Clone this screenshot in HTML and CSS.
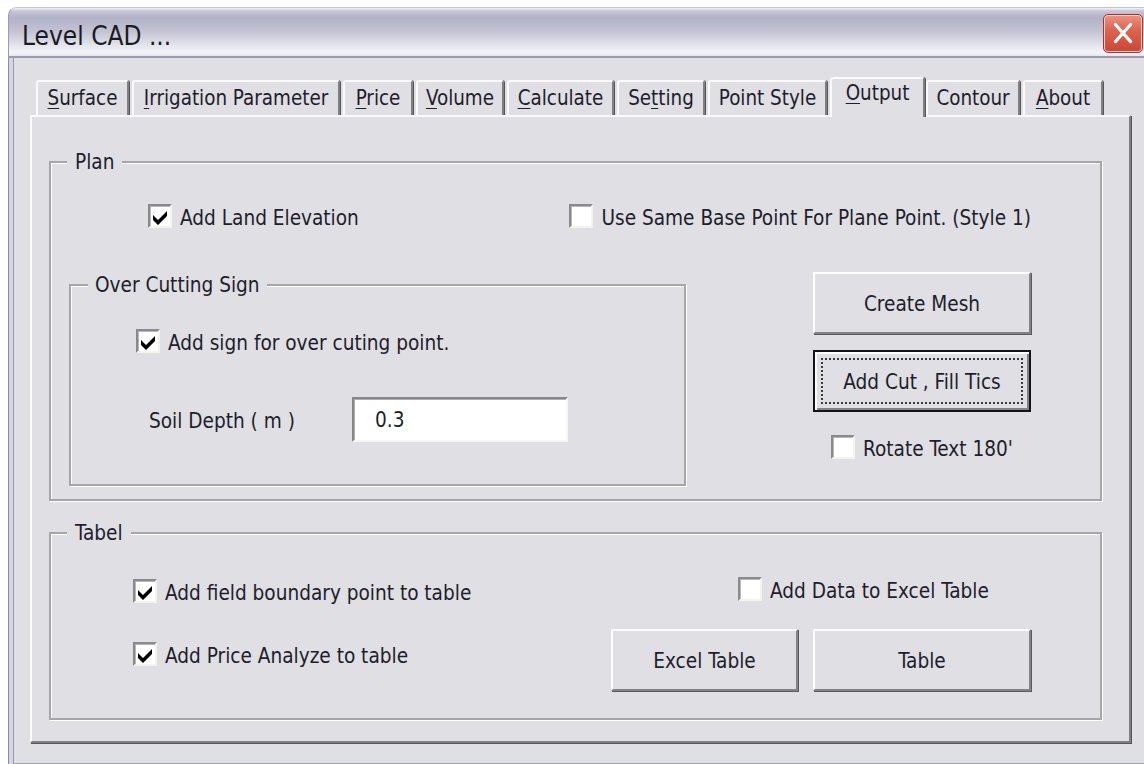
FILE: index.html
```html
<!DOCTYPE html>
<html lang="en">
<head>
<meta charset="utf-8">
<title>Level CAD ...</title>
<link rel="stylesheet" href="styles.css">
</head>
<body>
<div class="window">
  <div class="titlebar">
    <span class="title">Level CAD ...</span>
    <button class="close" type="button" aria-label="Close">
      <svg viewBox="0 0 40 39" width="40" height="39"><path d="M12 10 L28 28 M28 10 L12 28" stroke="#fff" stroke-width="3.4" stroke-linecap="round" fill="none"/></svg>
    </button>
  </div>
  <div class="client">
    <div class="tabs">
      <div class="tab t1"><u>S</u>urface</div>
      <div class="tab t2"><u>I</u>rrigation Parameter</div>
      <div class="tab t3"><u>P</u>rice</div>
      <div class="tab t4"><u>V</u>olume</div>
      <div class="tab t5"><u>C</u>alculate</div>
      <div class="tab t6">Se<u>t</u>ting</div>
      <div class="tab t7">Point Style</div>
      <div class="tab t8 active"><u>O</u>utput</div>
      <div class="tab t9">Contour</div>
      <div class="tab t10"><u>A</u>bout</div>
    </div>
    <div class="panel">
      <div class="group plan">
        <div class="group-title">Plan</div>
        <div class="plan-top">
          <div class="check land">
            <span class="box"><svg viewBox="0 0 16 16"><polygon points="1,6 6,11 15,2 15,7 6,16 1,11"/></svg></span>
            <span>Add Land Elevation</span>
          </div>
          <div class="check same-base">
            <span class="box"></span>
            <span>Use Same Base Point For Plane Point. (Style 1)</span>
          </div>
        </div>
        <div class="plan-main">
          <div class="group cutting">
            <div class="group-title">Over Cutting Sign</div>
            <div class="check cut-sign">
              <span class="box"><svg viewBox="0 0 16 16"><polygon points="1,6 6,11 15,2 15,7 6,16 1,11"/></svg></span>
              <span>Add sign for over cuting point.</span>
            </div>
            <div class="soil">
              <span class="soil-label">Soil Depth ( m )</span>
              <div class="input">0.3</div>
            </div>
          </div>
          <div class="actions">
            <button class="btn" type="button">Create Mesh</button>
            <button class="btn default" type="button"><span class="focus">Add Cut , Fill Tics</span></button>
            <div class="check rotate">
              <span class="box"></span>
              <span>Rotate Text 180'</span>
            </div>
          </div>
        </div>
      </div>
      <div class="group tabel">
        <div class="group-title">Tabel</div>
        <div class="tabel-body">
          <div class="tabel-left">
            <div class="check">
              <span class="box"><svg viewBox="0 0 16 16"><polygon points="1,6 6,11 15,2 15,7 6,16 1,11"/></svg></span>
              <span>Add field boundary point to table</span>
            </div>
            <div class="check price">
              <span class="box"><svg viewBox="0 0 16 16"><polygon points="1,6 6,11 15,2 15,7 6,16 1,11"/></svg></span>
              <span>Add Price Analyze to table</span>
            </div>
          </div>
          <div class="tabel-right">
            <div class="check excel-data">
              <span class="box"></span>
              <span>Add Data to Excel Table</span>
            </div>
            <div class="btn-row">
              <button class="btn excel" type="button">Excel Table</button>
              <button class="btn table" type="button">Table</button>
            </div>
          </div>
        </div>
      </div>
    </div>
  </div>
</div>
</body>
</html>
```
FILE: styles.css
```css
* {
  box-sizing: border-box;
}

body {
  margin: 0;
  background: #ffffff;
  font-family: "DejaVu Sans Condensed", "DejaVu Sans", sans-serif;
  font-size: 20.6px;
  color: #1e1e2c;
}

/* Window frame */
.window {
  margin: 7px 0 0 8px;
  width: 1136px;
  height: 757px;
  display: flex;
  flex-direction: column;
  border-radius: 8px 0 0 0;
  overflow: hidden;
}

.titlebar {
  flex: none;
  height: 51px;
  display: flex;
  align-items: flex-start;
  padding-left: 13px;
  border-top: 1px solid #c4c4d4;
  border-left: 1px solid #9a9ab0;
  border-bottom: 2px solid #9a9ab0;
  border-radius: 8px 0 0 0;
  background: linear-gradient(to bottom,
    #f4f4f8 0px,
    #c6c6d6 3px,
    #b2b2c8 10px,
    #c4c4d4 24px,
    #e6e6ee 38px,
    #f4f4f8 45px,
    #e4e4ec 48px);
}

.title {
  margin-top: 15px;
  font-size: 26px;
  line-height: 26px;
  color: #1a1a22;
}

.close {
  margin-left: auto;
  margin-top: 6px;
  margin-right: 1px;
  width: 40px;
  height: 39px;
  padding: 0;
  border: 1px solid #a8342a;
  border-radius: 5px;
  background: linear-gradient(to bottom, #ec9484 0%, #dc6450 40%, #cc4634 100%);
  box-shadow: inset 0 0 0 1px #f6d0c8;
  display: flex;
  align-items: center;
  justify-content: center;
}

.close svg {
  display: block;
}

/* Dialog client area */
.client {
  flex: 1;
  background: #e0dfe3;
  padding: 19px 0 0 22px;
  box-shadow:
    inset 1px 0 0 #8a8aa2,
    inset 5px 0 0 #d6d6e2,
    inset 6px 0 0 #9a9aae,
    inset 0 -1px 0 #a2a2ba;
}

/* Tab strip */
.tabs {
  display: flex;
  align-items: flex-end;
  height: 38px;
  padding-left: 6px;
}

.tab {
  position: relative;
  height: 35px;
  margin-right: 3px;
  padding-top: 4px;
  line-height: 24px;
  font-size: 20.4px;
  text-align: center;
  white-space: nowrap;
  border-top: 2px solid #fafafa;
  border-left: 2px solid #fafafa;
  border-right: 2px solid #808084;
  border-radius: 3px 3px 0 0;
  box-shadow: 1px 0 0 #55555a;
}

.tab u {
  text-underline-offset: 3px;
  text-decoration-thickness: 1px;
}

.t1 { width: 93px; }
.t2 { width: 208px; }
.t3 { width: 70px; }
.t4 { width: 88px; }
.t5 { width: 107px; }
.t6 { width: 88px; }
.t7 { width: 119px; }
.t8 { width: 95px; margin-right: 1px; }
.t9 { width: 94px; }
.t10 { width: 80px; }

.tab.active {
  z-index: 1;
  height: 40px;
  margin-bottom: -2px;
  padding-top: 2px;
  background: #e0dfe3;
}

/* Tab page */
.panel {
  width: 1101px;
  height: 628px;
  padding: 44px 27px 0 17px;
  border: 2px solid;
  border-color: #fafafa #808084 #808084 #fafafa;
  box-shadow: 1px 1px 0 #56565a;
}

/* Etched group boxes */
.group {
  border: 2px solid #a6a5aa;
  box-shadow: inset 1px 1px 0 #ffffff, 1px 1px 0 #ffffff;
}

.group-title {
  width: fit-content;
  height: 24px;
  line-height: 24px;
  margin: -13px 0 0 -2px;
  padding: 0 8px;
  background: #e0dfe3;
  white-space: nowrap;
}

.plan {
  height: 340px;
  padding: 0 69px 0 18px;
}

.plan-top {
  display: flex;
  justify-content: space-between;
  margin-top: 30px;
}

.land {
  margin-left: 79px;
}

.plan-main {
  display: flex;
  justify-content: space-between;
  align-items: flex-start;
  margin-top: 44px;
}

.cutting {
  width: 617px;
  height: 202px;
  margin-top: 12px;
}

.cutting .group-title {
  margin-left: 17px;
  padding: 0 7px;
}

.cut-sign {
  margin: 32px 0 0 65px;
}

.soil {
  display: flex;
  align-items: center;
  margin: 44px 0 0 78px;
}

.soil-label {
  width: 203px;
  padding-top: 2px;
}

.input {
  width: 216px;
  height: 45px;
  padding: 3px 0 0 21px;
  line-height: 36px;
  background: #ffffff;
  border: 2px solid;
  border-color: #86868a #f6f6f2 #f6f6f2 #86868a;
  box-shadow: inset 1px 1px 0 #b0b0b4;
}

.actions {
  width: 218px;
  display: flex;
  flex-direction: column;
}

.rotate {
  margin: 23px 0 0 18px;
}

/* Checkboxes */
.check {
  display: flex;
  align-items: center;
  height: 24px;
  gap: 8px;
  white-space: nowrap;
}

.check > span:last-child {
  padding-top: 3px;
}

.box {
  flex: none;
  width: 24px;
  height: 24px;
  background: #ffffff;
  border: 2px solid;
  border-color: #8a8a8e #f4f4ec #f4f4ec #8a8a8e;
  box-shadow: inset 1px 1px 0 #b8b8bc;
  display: flex;
  align-items: center;
  justify-content: center;
}

.box svg {
  width: 16px;
  height: 16px;
  margin: 1px 0 0 0;
  fill: #000000;
}

/* Push buttons */
.btn {
  display: flex;
  align-items: center;
  justify-content: center;
  height: 62px;
  padding: 2px 0 0;
  font: inherit;
  color: #1e1e2c;
  background: #e0dfe3;
  border: 2px solid;
  border-color: #ffffff #838387 #838387 #ffffff;
  box-shadow: 1px 1px 0 #5a5a5e;
  white-space: nowrap;
}

.btn.default {
  margin-top: 16px;
  padding: 6px;
  border: 2px solid #141418;
  box-shadow: inset 2px 2px 0 #ffffff, inset -2px -2px 0 #838387;
}

.focus {
  flex: 1;
  align-self: stretch;
  display: flex;
  align-items: center;
  justify-content: center;
  padding-top: 2px;
  border: 2px dotted #3a3a40;
}

/* Table group */
.tabel {
  height: 188px;
  margin-top: 31px;
  padding: 0 69px 0 18px;
}

.tabel-body {
  display: flex;
  justify-content: space-between;
  align-items: flex-start;
}

.tabel-left {
  margin: 34px 0 0 64px;
}

.tabel-left .price {
  margin-top: 39px;
}

.tabel-right {
  width: 420px;
  margin-top: 32px;
}

.excel-data {
  margin-left: 127px;
}

.btn-row {
  display: flex;
  gap: 15px;
  margin-top: 28px;
}

.btn.excel {
  width: 187px;
}

.btn.table {
  width: 218px;
}
```
